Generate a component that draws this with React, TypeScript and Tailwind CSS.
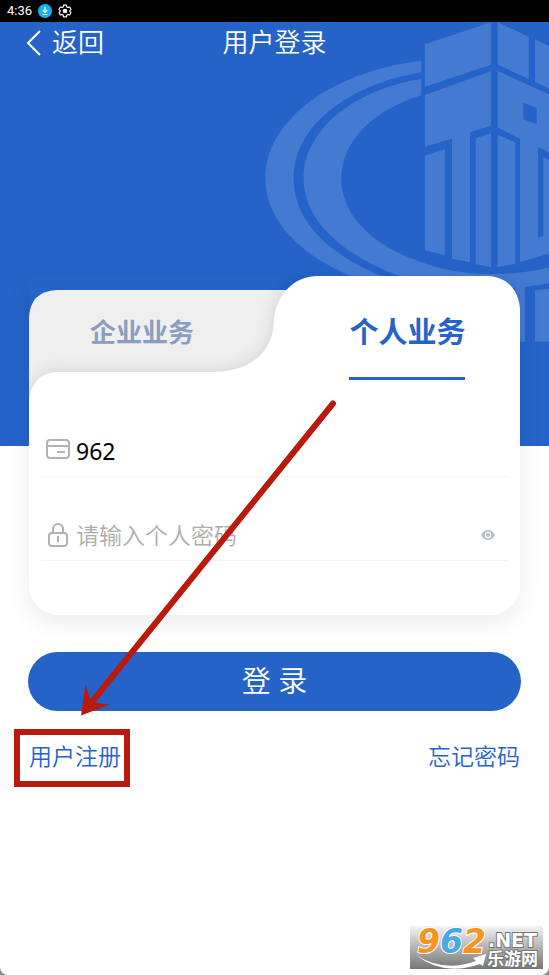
type FieldProps = {
    id: string;
    label: string;
    type: string;
    placeholder?: string;
    defaultValue?: string;
    icon: React.ReactNode;
    action?: React.ReactNode;
};

const StatusBar = () => (
    <div className="flex h-[22px] items-center gap-1.5 bg-black px-[7px] font-[Roboto,sans-serif] text-[13px] text-white">
        <span>4:36</span>
        <svg className="h-3.5 w-3.5" viewBox="0 0 14 14" fill="none">
            <circle cx="7" cy="7" r="7" fill="#12b5ee" />
            <path d="M7 3v5M4.800 6.200 7 8.400l2.200-2.200M4.500 10.500h5" stroke="#fff" strokeWidth="1.200" />
        </svg>
        <svg className="h-3.5 w-3.5" viewBox="0 0 24 24" fill="none" stroke="#fff" strokeWidth="2">
            <path strokeLinejoin="round" d="M9.500 2h5l.6 3 2 1.200 2.900-1 2.400 4.100-2.200 2v1.400l2.200 2-2.400 4.100-2.900-1-2 1.200-.6 3h-5l-.6-3-2-1.200-2.900 1-2.400-4.100 2.200-2v-1.400l-2.200-2L4 5.200l2.900 1 2-1.200z" />
            <circle cx="12" cy="12" r="3" fill="#fff" />
        </svg>
    </div>
);

const Watermark = () => (
    <svg className="absolute right-0 top-0 h-[424px] w-[299px]" viewBox="0 21 897 1272" fill="#447ad0">
        <path d="M514 137C245 170 46 315 46 490c0 120 95 225 254 292l140 60V802C220 720 131 610 131 490c0-155 160-280 383-318z" />
        <path d="M514 192C310 224 161 345 161 490c0 120 100 220 279 290 130 50 290 55 457 25V758c-150 32-280 22-387-18C350 685 274 590 274 490c0-110 95-205 240-249z" />
        <path d="M525 88 723 22v127L525 215z" />
        <path d="M743 22 836 65v127l-93-43z" />
        <path d="M855 73 897 93v127l-42-19z" />
        <path d="M525 240 723 168v164l-63 20v390l-54-11V371l-81 24z" />
        <path d="M525 422 585 402v319l-60-15z" />
        <path d="M677 370 723 355v402l-46-10z" />
        <path fillRule="evenodd" d="M743 168 897 238V412L864 395v275l16-8V427l17 7v282l-87 26V371l-67-33zM820 263v50l40 15v-49z" />
        <path d="M743 360 796 382v364l-53 11z" />
        <path d="M795 795h30v185h-30zM855 826l42-5v159h-42z" />
    </svg>
);

const TabShape = () => (
    <svg className="absolute inset-0 h-full w-full" viewBox="0 0 491 130" preserveAspectRatio="none">
        <defs>
            <filter id="tab-shadow" x="-10%" y="-20%" width="120%" height="140%">
                <feDropShadow dx="0" dy="0" stdDeviation="8" floodColor="#000" floodOpacity="0.140" />
            </filter>
        </defs>
        <path d="M0 130V42Q1 15 28 14H290V130z" fill="#efefef" />
        <path
            d="M0 130V124Q4 96 30 96H184C222 96 245 75 245 44C247 20 264 0 289 0H459C478 1 490 14 491 33V130z"
            fill="#fff"
            filter="url(#tab-shadow)"
        />
    </svg>
);

const Field: React.FC<FieldProps> = ({ id, label, type, placeholder, defaultValue, icon, action }) => (
    <div className="flex h-[84px] items-end border-b border-gray-100 px-[5px] pb-[7px]">
        <label htmlFor={id} aria-label={label} className="flex h-9 w-6 items-center justify-center">
            {icon}
        </label>
        <input
            id={id}
            type={type}
            placeholder={placeholder}
            defaultValue={defaultValue}
            className="ml-1.5 h-9 min-w-0 flex-1 bg-transparent text-[23px] text-black outline-none placeholder:font-[350] placeholder:text-[#acacac]"
        />
        {action}
    </div>
);

const CardIcon = () => (
    <svg className="mb-1 h-5 w-6" viewBox="0 0 24 20" fill="none" stroke="#b2b2b2" strokeWidth="2">
        <rect x="1" y="1" width="22" height="18" rx="3" />
        <path d="M1 7h22M11 13h8" />
    </svg>
);

const LockIcon = () => (
    <svg className="h-6 w-5" viewBox="0 0 20 24" fill="none" stroke="#b2b2b2" strokeWidth="2">
        <rect x="1" y="10" width="18" height="13" rx="3" />
        <path d="M5 10V6a5 5 0 0 1 10 0v4M10 13v6" />
    </svg>
);

const EyeIcon = () => (
    <svg className="h-2.5 w-3.5" viewBox="0 0 14 10">
        <path d="M0 5Q3 0 7 0t7 5Q11 10 7 10T0 5z" fill="#b9bec9" />
        <circle cx="7" cy="5" r="2.700" fill="none" stroke="#fff" strokeWidth="1.200" />
    </svg>
);

// red arrow that points at the register link
const Arrow = () => (
    <svg className="pointer-events-none absolute left-[80px] top-[400px] h-[316px] w-[256px]" viewBox="80 400 256 316">
        <path d="M333 403.500 91 703" stroke="#b91a0d" strokeWidth="6" strokeLinecap="round" />
        <path d="M81 715.500 85.500 684 90 699 94 702.500 110 704.500z" fill="#b91a0d" />
    </svg>
);

const SiteBadge = () => (
    <div className="absolute bottom-[6px] right-[6px] h-[43px] w-[133px] bg-linear-to-b from-[#f4f4f4] to-[#777]">
        <svg className="h-full w-full overflow-visible" viewBox="0 0 133 43">
            <path d="M6 29Q34 47 66 35l-3-3 13-4-3 12-3-2Q34 51 6 29z" fill="#fff" />
            <text
                x="7"
                y="27"
                fontFamily="DejaVu Sans, sans-serif"
                fontWeight="700"
                fontStyle="italic"
                fontSize="33"
                stroke="#fff"
                strokeWidth="2"
                paintOrder="stroke"
            >
                <tspan fill="#f7941d">9</tspan>
                <tspan fill="#4aa9e0">6</tspan>
                <tspan fill="#f7941d">2</tspan>
            </text>
            <g fill="#fff" stroke="#777" strokeWidth="2" paintOrder="stroke" fontWeight="700">
                <text x="78" y="21" fontFamily="DejaVu Sans, sans-serif" fontSize="19">.NET</text>
                <text x="77" y="39" fontFamily="Noto Sans CJK SC, sans-serif" fontSize="17">乐游网</text>
            </g>
        </svg>
    </div>
);

export default function App() {
    return (
        <div className="bg-[#8a8a8a]">
            <div className="relative min-h-screen rounded-b-lg bg-white font-['Noto_Sans','Noto_Sans_CJK_SC',sans-serif] text-[#2563c8]">
                <StatusBar />
                <div className="relative">
                    <div className="absolute inset-x-0 top-0 h-[424px] overflow-hidden bg-[#2563c8]">
                        <Watermark />
                    </div>
                    <header className="relative grid h-10 grid-cols-3 items-center px-6 text-[26px] font-[350] text-white">
                        <button type="button" className="flex items-center gap-2">
                            <svg className="h-7 w-5" viewBox="0 0 20 28" fill="none" stroke="#fff" strokeWidth="2">
                                <path d="M16 3 4 15l12 12" />
                            </svg>
                            返回
                        </button>
                        <h1 className="text-center">用户登录</h1>
                    </header>

                    <main className="relative px-7 pt-[214px]">
                        <form onSubmit={(e) => e.preventDefault()}>
                            <div className="mx-px rounded-b-[30px] shadow-[0_8px_24px_rgba(0,0,0,0.08)]">
                                <div className="relative h-[130px]">
                                    <TabShape />
                                    <div role="tablist" className="relative grid h-full grid-cols-[46%_54%] font-bold">
                                        <button type="button" role="tab" aria-selected="false" className="h-[112px] text-[26px] text-[#8a9fc0]">
                                            企业业务
                                        </button>
                                        <button type="button" role="tab" aria-selected="true" className="flex h-[104px] items-end justify-center pl-10 text-[29px]">
                                            <span className="border-b-3 border-[#2563c8] pb-6">个人业务</span>
                                        </button>
                                    </div>
                                </div>
                                <div className="rounded-b-[30px] bg-white px-3 pb-[54px]">
                                    <div className="-mt-[13px]">
                                        <Field id="account" label="账号" type="text" defaultValue="962" icon={<CardIcon />} />
                                        <Field
                                            id="password"
                                            label="密码"
                                            type="password"
                                            placeholder="请输入个人密码"
                                            icon={<LockIcon />}
                                            action={
                                                <button type="button" aria-label="显示密码" className="mr-px flex h-9 w-7 items-center justify-center">
                                                    <EyeIcon />
                                                </button>
                                            }
                                        />
                                    </div>
                                </div>
                            </div>
                            <button type="submit" className="mt-[37px] h-[59px] w-full rounded-full bg-[#2563c8] pb-0.5 text-[29px] font-[350] text-white">
                                登 录
                            </button>
                        </form>
                        <nav className="mt-[18px] flex h-[58px] items-stretch justify-between px-px text-[23px] font-[350]">
                            <a href="#register" className="-ml-[15px] flex items-center border-[6px] border-[#b91a0d] pb-1 pl-[9px] pr-[3px]">
                                用户注册
                            </a>
                            <a href="#forgot" className="flex items-center pb-1">
                                忘记密码
                            </a>
                        </nav>
                    </main>
                </div>
                <Arrow />
                <SiteBadge />
            </div>
        </div>
    );
}
